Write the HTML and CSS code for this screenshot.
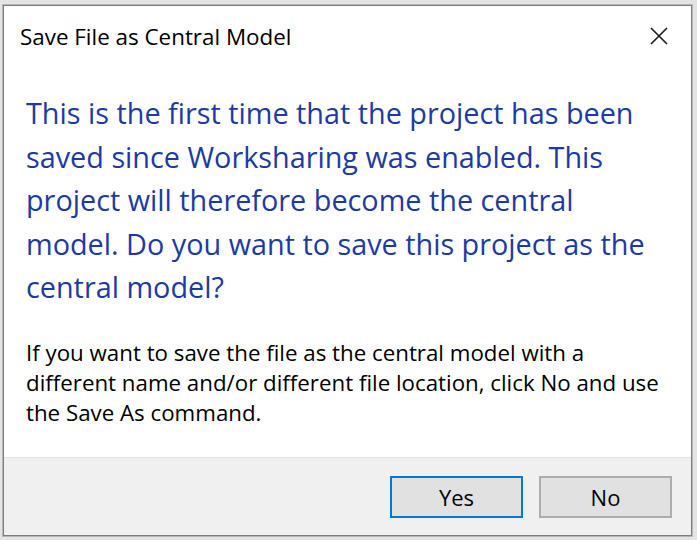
FILE: index.html
```html
<!DOCTYPE html>
<html>
<head>
<meta charset="utf-8">
<link rel="stylesheet" href="styles.css">
</head>
<body>
<div class="window">
  <div class="titlebar">
    <span class="title">Save File as Central Model</span>
    <span class="close">
      <svg width="20" height="20" viewBox="0 0 20 20"><path d="M2 2 L18 18 M18 2 L2 18" stroke="#1a1a1a" stroke-width="1.6" fill="none"/></svg>
    </span>
  </div>
  <div class="content">
    <p class="main">This is the first time that the project has been<br>saved since Worksharing was enabled. This<br>project will therefore become the central<br>model. Do you want to save this project as the<br>central model?</p>
    <p class="info">If you want to save the file as the central model with a<br>different name and/or different file location, click No and use<br>the Save As command.</p>
  </div>
  <div class="footer">
    <button class="btn btn-default">Yes</button>
    <button class="btn">No</button>
  </div>
</div>
</body>
</html>
```

FILE: styles.css
```css
html, body {
  margin: 0;
  padding: 0;
}
body {
  width: 697px;
  height: 540px;
  background: #e4e4e4;
  font-family: "Open Sans", "Noto Sans", sans-serif;
  overflow: hidden;
}
.window {
  box-sizing: border-box;
  margin: 5px 0 0 3px;
  width: 689px;
  height: 531px;
  border: 1px solid #7d7d7d;
  box-shadow: 0 0 0 1px #b8b8b8;
  background: #fff;
  display: flex;
  flex-direction: column;
}
.titlebar {
  height: 60px;
  display: flex;
  align-items: center;
  justify-content: space-between;
  padding: 0 22px 0 16px;
}
.title {
  font-size: 22.4px;
  color: #000;
}
.close {
  display: flex;
}
.content {
  flex: 1;
  padding: 0 0 0 22px;
}
.main {
  margin: 25px 0 0 0;
  font-size: 28.8px;
  line-height: 43.5px;
  color: #1d3aa3;
}
.info {
  margin: 29px 0 0 0;
  font-size: 22.3px;
  line-height: 30px;
  color: #000;
}
.footer {
  height: 78px;
  box-sizing: border-box;
  background: #f0f0f0;
  border-top: 1px solid #e0e0e0;
  display: flex;
  justify-content: flex-end;
  align-items: flex-start;
  gap: 16px;
  padding: 18px 19px 0 0;
}
.btn {
  box-sizing: border-box;
  width: 133px;
  height: 42px;
  background: #e1e1e1;
  border: 2px solid #adadad;
  font-family: "Open Sans", "Noto Sans", sans-serif;
  font-size: 22px;
  color: #000;
  padding: 0;
}
.btn-default {
  border-color: #0078d7;
}
```
